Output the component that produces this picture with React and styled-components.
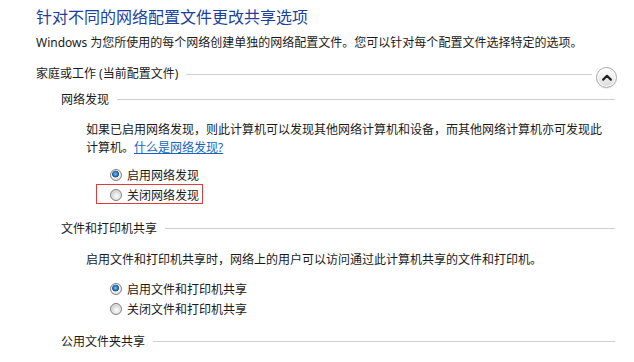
import React from 'react';
import styled, { createGlobalStyle } from 'styled-components';

const Global = createGlobalStyle`
  html, body {
    margin: 0;
    padding: 0;
    background: #ffffff;
  }
  body {
    font-family: "Segoe UI", "Noto Sans", "Noto Sans CJK SC", sans-serif;
    font-size: 12px;
    color: #1a1a1a;
  }
`;

const Page = styled.div`
  width: 634px;
  height: 362px;
  box-sizing: border-box;
  padding: 7px 17px 0 36px;
  overflow: hidden;
`;

const Title = styled.h1`
  margin: 0;
  font-size: 16px;
  font-weight: normal;
  line-height: 20px;
  color: #1c3f9e;
  white-space: nowrap;
`;

const Intro = styled.p`
  margin: 7px 0 0;
  line-height: 18px;
  white-space: nowrap;
`;

const HeaderRow = styled.div`
  display: flex;
  align-items: center;
  height: 18px;
  margin-top: ${p => p.$gap}px;
  white-space: nowrap;
`;

const Rule = styled.div`
  flex: 1;
  height: 1px;
  background: #cfcfcf;
  margin-left: 8px;
  margin-top: ${p => p.$drop || 0}px;
`;

const CollapseButton = styled.button`
  width: 21px;
  height: 21px;
  margin: 8px 0 0 4px;
  padding: 0;
  border-radius: 50%;
  border: 1px solid #a9a9a9;
  background: linear-gradient(#ffffff 0%, #f1f1f1 45%, #d9d9d9 100%);
  box-shadow: inset 0 0 0 1px #ffffff, 0 1px 1px rgba(0, 0, 0, 0.08);
  display: flex;
  align-items: center;
  justify-content: center;
  flex-shrink: 0;
  cursor: pointer;
`;

const Section = styled.section`
  margin-left: 25px;
  margin-right: 2px;
`;

const Body = styled.div`
  padding-left: 25px;
`;

const Text = styled.p`
  margin: ${p => p.$gap}px 0 0;
  line-height: 18px;
  white-space: nowrap;
`;

const Link = styled.a`
  color: #1565c0;
  text-decoration: underline;
  cursor: pointer;
`;

const RadioList = styled.div`
  margin-top: ${p => p.$gap}px;
  padding-left: 24px;
`;

const RadioRow = styled.label`
  position: relative;
  display: flex;
  align-items: center;
  gap: 5px;
  height: 20px;
  white-space: nowrap;
`;

const RadioDot = styled.span`
  width: 12px;
  height: 12px;
  box-sizing: border-box;
  border-radius: 50%;
  border: 1px solid #7f7f7f;
  flex-shrink: 0;
  background: ${p =>
    p.$checked
      ? 'radial-gradient(circle at 45% 40%, #7cc4f0 0px, #2e7fc4 2px, #1b4f8f 3.2px, #ffffff 3.8px, #eeeeee 4.6px, #c9c9c9 6px)'
      : 'radial-gradient(circle at 55% 60%, #ffffff 0px, #eaeaea 2.5px, #c4c4c4 6px)'};
  box-shadow: inset 0 0 0 1px rgba(255, 255, 255, 0.5);
`;

const Highlight = styled.span`
  position: absolute;
  left: -14px;
  top: -1px;
  width: 107px;
  height: 20px;
  box-sizing: border-box;
  border: 1px solid #e03c3c;
  pointer-events: none;
`;

function Chevron() {
  return (
    <svg width="10" height="7" viewBox="0 0 10 7">
      <path d="M1.2 5.6 L5 1.8 L8.8 5.6" fill="none" stroke="#222" strokeWidth="2.2" strokeLinecap="round" strokeLinejoin="round" />
    </svg>
  );
}

function Radio({ checked, label, marked }) {
  return (
    <RadioRow>
      {marked && <Highlight />}
      <RadioDot $checked={checked} />
      <span>{label}</span>
    </RadioRow>
  );
}

export default function App() {
  return (
    <Page>
      <Global />
      <Title>针对不同的网络配置文件更改共享选项</Title>
      <Intro>Windows 为您所使用的每个网络创建单独的网络配置文件。您可以针对每个配置文件选择特定的选项。</Intro>

      <HeaderRow $gap={12}>
        <span>家庭或工作 (当前配置文件)</span>
        <Rule $drop={3} />
        <CollapseButton aria-label="折叠">
          <Chevron />
        </CollapseButton>
      </HeaderRow>

      <Section>
        <HeaderRow $gap={8}>
          <span>网络发现</span>
          <Rule />
        </HeaderRow>
        <Body>
          <Text $gap={13}>
            如果已启用网络发现，则此计算机可以发现其他网络计算机和设备，而其他网络计算机亦可发现此
            <br />
            计算机。<Link>什么是网络发现?</Link>
          </Text>
          <RadioList $gap={8}>
            <Radio checked label="启用网络发现" />
            <Radio label="关闭网络发现" marked />
          </RadioList>
        </Body>
      </Section>

      <Section>
        <HeaderRow $gap={14}>
          <span>文件和打印机共享</span>
          <Rule />
        </HeaderRow>
        <Body>
          <Text $gap={14}>启用文件和打印机共享时，网络上的用户可以访问通过此计算机共享的文件和打印机。</Text>
          <RadioList $gap={10}>
            <Radio checked label="启用文件和打印机共享" />
            <Radio label="关闭文件和打印机共享" />
          </RadioList>
        </Body>
      </Section>

      <Section>
        <HeaderRow $gap={13}>
          <span>公用文件夹共享</span>
          <Rule />
        </HeaderRow>
      </Section>
    </Page>
  );
}
